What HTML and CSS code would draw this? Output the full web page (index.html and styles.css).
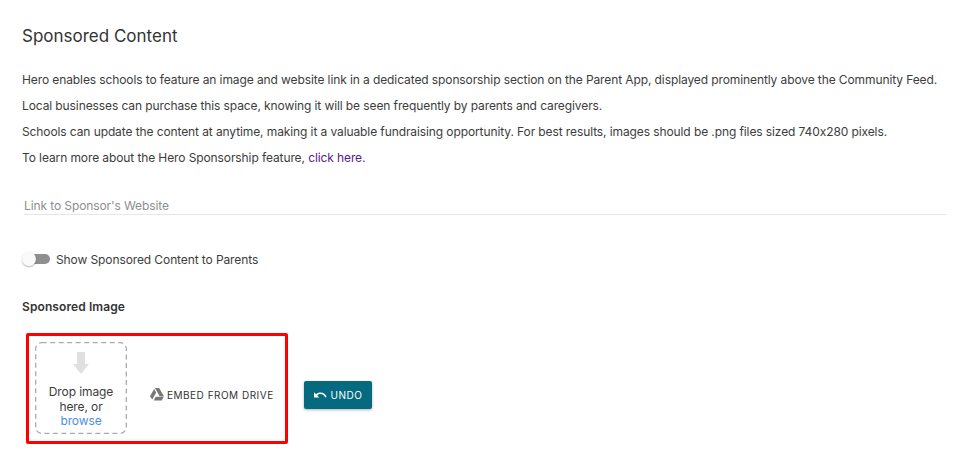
FILE: index.html
```html
<!DOCTYPE html>
<html lang="en">
<head>
<meta charset="utf-8">
<title>Sponsored Content</title>
<link rel="stylesheet" href="styles.css">
</head>
<body>
<main class="page">
  <h1 class="title">Sponsored Content</h1>
  <div class="intro">
    <p>Hero enables schools to feature an image and website link in a dedicated sponsorship section on the Parent App, displayed prominently above the Community Feed.</p>
    <p>Local businesses can purchase this space, knowing it will be seen frequently by parents and caregivers.</p>
    <p>Schools can update the content at anytime, making it a valuable fundraising opportunity. For best results, images should be .png files sized 740x280 pixels.</p>
    <p>To learn more about the Hero Sponsorship feature, <a class="visited" href="#">click here</a>.</p>
  </div>
  <div class="field">Link to Sponsor's Website</div>
  <div class="toggle-row">
    <span class="toggle"><span class="track"></span><span class="thumb"></span></span>
    <span>Show Sponsored Content to Parents</span>
  </div>
  <h2 class="label">Sponsored Image</h2>
  <div class="actions">
    <div class="highlight">
      <div class="drop">
        <svg class="dash" width="92" height="92" viewBox="0 0 92 92"><rect x=".7" y=".7" width="90.600" height="90.600" rx="6" fill="none" stroke="#aaa" stroke-width="1.300" stroke-dasharray="5 3.500"/></svg>
        <svg class="drop-icon" width="16" height="22" viewBox="0 0 16 22"><path d="M4 0h8v12h4l-8 10-8-10h4z" fill="#e0e0e0"/></svg>
        <div class="drop-text">Drop image<br>here, or<br><a class="browse" href="#">browse</a></div>
      </div>
      <div class="drive">
        <svg width="14" height="13" viewBox="0 0 14 13"><path d="M4.900 0h4.200l4.900 8.200h-4.300zM4.100.9l2.100 3.700-3.900 7L0 8.300zM3.700 12.600l2-3.900h8.100l-2.100 3.900z" fill="#777"/></svg>
        <span>EMBED FROM DRIVE</span>
      </div>
    </div>
    <button class="undo" type="button">
      <svg width="13" height="8" viewBox="0 0 13 8"><path d="M6.500 1.500C4.800 1.500 3.200 2.100 2 3.200L0 1.200V6.500h5.300L3.200 4.400c.9-.8 2.100-1.300 3.300-1.300 2.100 0 3.900 1.400 4.600 3.300l1.500-.5C11.700 3.300 9.300 1.500 6.500 1.500z" fill="#fff"/></svg>
      <span>UNDO</span>
    </button>
  </div>
</main>
</body>
</html>
```
FILE: styles.css
```css
* { box-sizing: border-box; }
html, body { margin: 0; background: #fff; }
body {
  font-family: Inter, "Liberation Sans", sans-serif;
  font-size: 12px;
  font-feature-settings: "calt" 0;
  letter-spacing: -.1px;
  color: #3c3c3c;
  height: 463px;
  overflow: hidden;
}
.page { padding: 25px 26px 0 22px; }
.title {
  margin: 0;
  font-size: 17px;
  font-weight: 400;
  line-height: 22px;
  letter-spacing: 0;
  color: #333;
}
.intro { margin-top: 23px; }
.intro p { margin: 0 0 6px; line-height: 20px; white-space: nowrap; }
.visited { color: #551a8b; text-decoration: none; }
.field {
  margin: 27px 0 0 2px;
  height: 20px;
  padding-top: 1px;
  line-height: 20px;
  color: #8e8e8e;
  border-bottom: 1px solid #e6e6e6;
}
.toggle-row {
  display: flex;
  align-items: center;
  gap: 7px;
  margin-top: 34px;
  height: 20px;
}
.toggle { position: relative; display: block; width: 27px; height: 14px; }
.track {
  position: absolute;
  left: 2px; top: 2px;
  width: 26px; height: 10px;
  border-radius: 5px;
  background: #8f8f8f;
}
.thumb {
  position: absolute;
  left: 0; top: 0;
  width: 14px; height: 14px;
  border-radius: 50%;
  background: #fafafa;
  box-shadow: 0 1px 2px rgba(0,0,0,.3);
}
.label {
  margin: 28px 0 0;
  font-size: 12px;
  font-weight: 600;
  line-height: 20px;
  letter-spacing: .1px;
  color: #333;
}
.actions {
  display: flex;
  align-items: flex-start;
  gap: 16px;
  margin: 16px 0 0 4px;
}
.highlight {
  display: flex;
  align-items: flex-start;
  width: 262px;
  height: 111px;
  padding: 6px;
  border: 3px solid #f00;
  border-radius: 2px;
}
.drop {
  position: relative;
  display: flex;
  flex-direction: column;
  align-items: center;
  width: 92px;
  height: 92px;
  padding-top: 10px;
}
.dash { position: absolute; left: 0; top: 0; }
.drop-text { margin-top: 11px; text-align: center; line-height: 14.500px; }
.browse { color: #4a8fe7; text-decoration: none; }
.drive {
  display: flex;
  align-items: center;
  gap: 3px;
  margin: 46px 0 0 23px;
  font-size: 10px;
  letter-spacing: .5px;
  white-space: nowrap;
  color: #333;
}
.undo {
  display: flex;
  align-items: center;
  justify-content: center;
  gap: 4px;
  width: 68px;
  height: 28px;
  margin-top: 48px;
  padding: 0;
  border: 0;
  border-radius: 2px;
  background: #056a80;
  color: #fff;
  font: 400 10px Inter, "Liberation Sans", sans-serif;
  letter-spacing: .5px;
  box-shadow: 0 1px 3px rgba(0,0,0,.3);
}
```
